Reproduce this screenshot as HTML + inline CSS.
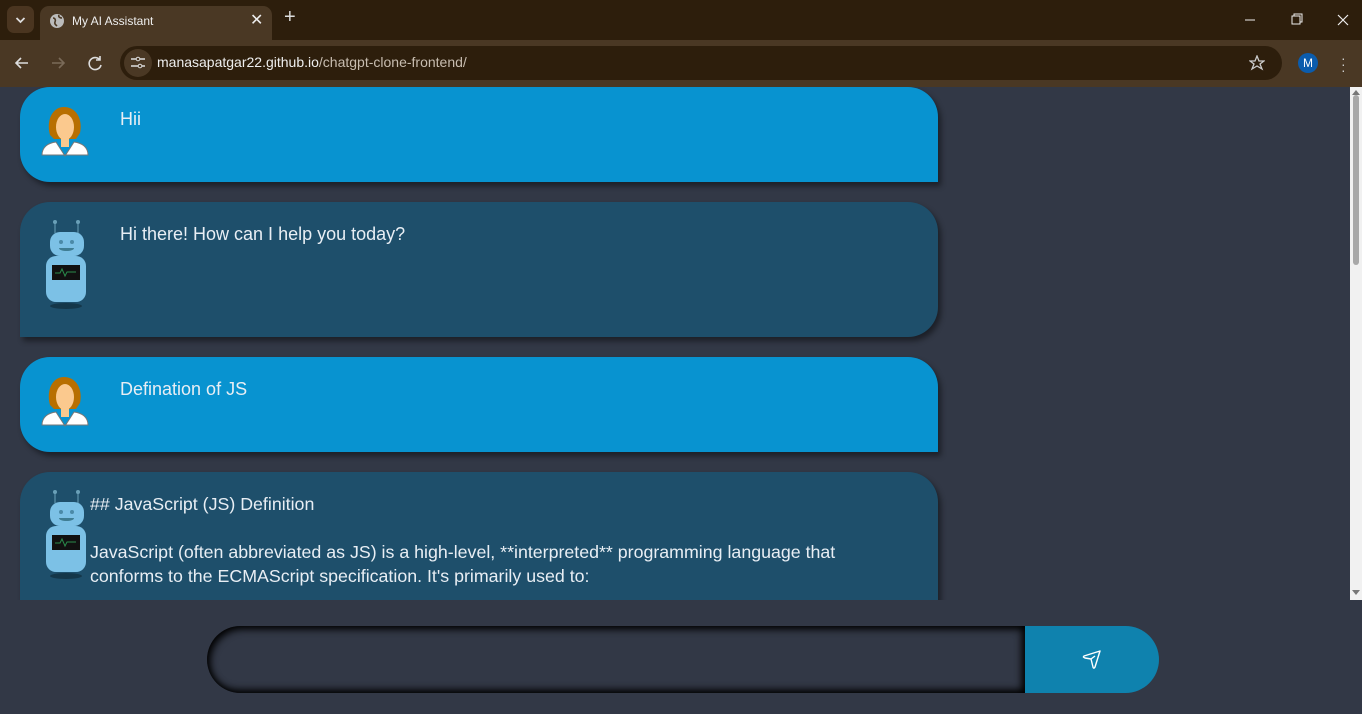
<!DOCTYPE html>
<html><head><meta charset="utf-8"><style>
*{margin:0;padding:0;box-sizing:border-box}
body{width:1362px;height:714px;overflow:hidden;background:#323846;font-family:"Liberation Sans",sans-serif;position:relative}
.tabbar{position:absolute;left:0;top:0;width:1362px;height:40px;background:#2d1e0c}
.tbtn{position:absolute;left:7px;top:6px;width:27px;height:27px;border-radius:7px;background:#4a3520}
.tab{position:absolute;left:40px;top:6px;width:232px;height:34px;background:#4a3824;border-radius:9px 9px 0 0;color:#eee;font-size:12px}
.nav{position:absolute;left:0;top:40px;width:1362px;height:47px;background:#4a3824}
.url{position:absolute;left:120px;top:6px;width:1162px;height:34px;border-radius:17px;background:#2d1e0c;color:#eee;font-size:14px}
.main{position:absolute;left:0;top:87px;width:1350px;height:513px;overflow:hidden}
.card{position:absolute;left:20px;width:918px;color:#e8eef4;font-size:18px;box-shadow:3px 4px 6px rgba(0,0,0,.45)}
.u{background:#0893d0;border-radius:30px 30px 0 30px}
.b{background:#1e4f6b;border-radius:30px 30px 30px 0}
.card .t{position:absolute;left:100px}
.sb{position:absolute;left:1350px;top:87px;width:12px;height:513px;background:#f1f1f1}
</style></head><body>
<div class="tabbar">
 <div class="tbtn"><svg width="27" height="27"><path d="M9.5 12l4 4 4-4" stroke="#ddd" stroke-width="1.8" fill="none"/></svg></div>
 <div class="tab">
  <svg style="position:absolute;left:9px;top:7px" width="16" height="16"><circle cx="8" cy="8" r="7" fill="#bbb"/><path d="M4 5c2 0 3 2 2 4s1 3 2 4M10 2c-1 2 1 3 3 3" stroke="#4a3824" stroke-width="1.6" fill="none"/></svg>
  <span style="position:absolute;left:32px;top:8px">My AI Assistant</span>
  <span style="position:absolute;left:210px;top:4px;font-size:16px">✕</span>
 </div>
 <span style="position:absolute;left:284px;top:6px;color:#ddd;font-size:20px">+</span>
 <svg style="position:absolute;left:1240px;top:12px" width="115" height="16"><path d="M5 8h10" stroke="#eee"/><rect x="52" y="4" width="8" height="8" fill="none" stroke="#eee"/><path d="M54 4V2h8v8h-2" fill="none" stroke="#eee"/><path d="M98 3l10 10M108 3L98 13" stroke="#eee" stroke-width="1.2"/></svg>
</div>
<div class="nav">
 <svg style="position:absolute;left:12px;top:14px" width="100" height="18"><path d="M16 9H4M9 4L4 9l5 5" stroke="#ddd" stroke-width="1.6" fill="none"/><path d="M40 9h12M47 4l5 5-5 5" stroke="#7a6a58" stroke-width="1.6" fill="none"/><path d="M88 6a6 6 0 1 0 1 5M88 2v4h-4" stroke="#ddd" stroke-width="1.6" fill="none"/></svg>
 <div class="url">
  <div style="position:absolute;left:4px;top:3px;width:28px;height:28px;border-radius:14px;background:#4a3824"></div>
  <svg style="position:absolute;left:9px;top:10px" width="18" height="14"><path d="M2 3h5M11 3h5M2 10h7M13 10h3" stroke="#ddd" stroke-width="1.4"/><circle cx="9" cy="3" r="1.8" fill="none" stroke="#ddd"/><circle cx="11" cy="10" r="1.8" fill="none" stroke="#ddd"/></svg>
  <span style="position:absolute;left:37px;top:8px">manasapatgar22.github.io<span style="color:#c8bdb0">/chatgpt-clone-frontend/</span></span>
  <svg style="position:absolute;left:1129px;top:9px" width="16" height="16"><path d="M8 1l2 5h5l-4 3 2 5-5-3-5 3 2-5-4-3h5z" fill="none" stroke="#ccc" stroke-width="1.3"/></svg>
 </div>
 <div style="position:absolute;left:1298px;top:13px;width:20px;height:20px;border-radius:10px;background:#0b5cad;color:#fff;font-size:12px;text-align:center;line-height:20px">M</div>
 <div style="position:absolute;left:1341px;top:15px;color:#ccc;font-size:14px;line-height:6px">·<br>·<br>·</div>
</div>
<div class="main">
 <div class="card u" style="top:0;height:95px"><svg style="position:absolute;left:20px;top:18px" width="50" height="52"><path d="M10 30c-4-14 2-28 14-28s19 12 16 26l-4 6-22 0z" fill="#b86f00"/><ellipse cx="25" cy="22" rx="9" ry="13" fill="#fbc98e"/><rect x="21" y="30" width="8" height="12" fill="#fbc98e"/><path d="M2 50c0-8 6-12 14-13l9 14 9-14c8 1 14 5 14 13z" fill="#fff" stroke="#777"/></svg><span class="t" style="top:22px">Hii</span></div>
 <div class="card b" style="top:115px;height:135px"><svg style="position:absolute;left:24px;top:18px" width="46" height="90"><path d="M11 1v12M34 1v12" stroke="#6aa0b8"/><circle cx="11" cy="2" r="2" fill="#6aa0b8"/><circle cx="34" cy="2" r="2" fill="#6aa0b8"/><rect x="6" y="12" width="34" height="24" rx="10" fill="#7cc1e6"/><circle cx="17" cy="22" r="2" fill="#4b8aa8"/><circle cx="28" cy="22" r="2" fill="#4b8aa8"/><path d="M15 28h15c0 4-15 4-15 0z" fill="#3f7d93"/><rect x="2" y="36" width="40" height="46" rx="10" fill="#7cc1e6"/><rect x="8" y="45" width="28" height="15" fill="#111"/><path d="M11 53h5l2-4 3 7 2-4h9" stroke="#2a8a4a" fill="none"/><ellipse cx="22" cy="86" rx="16" ry="3" fill="rgba(0,0,0,.3)"/></svg><span class="t" style="top:22px">Hi there! How can I help you today?</span></div>
 <div class="card u" style="top:270px;height:95px"><svg style="position:absolute;left:20px;top:18px" width="50" height="52"><path d="M10 30c-4-14 2-28 14-28s19 12 16 26l-4 6-22 0z" fill="#b86f00"/><ellipse cx="25" cy="22" rx="9" ry="13" fill="#fbc98e"/><rect x="21" y="30" width="8" height="12" fill="#fbc98e"/><path d="M2 50c0-8 6-12 14-13l9 14 9-14c8 1 14 5 14 13z" fill="#fff" stroke="#777"/></svg><span class="t" style="top:22px">Defination of JS</span></div>
 <div class="card b" style="top:385px;height:160px"><svg style="position:absolute;left:24px;top:18px" width="46" height="90"><path d="M11 1v12M34 1v12" stroke="#6aa0b8"/><circle cx="11" cy="2" r="2" fill="#6aa0b8"/><circle cx="34" cy="2" r="2" fill="#6aa0b8"/><rect x="6" y="12" width="34" height="24" rx="10" fill="#7cc1e6"/><circle cx="17" cy="22" r="2" fill="#4b8aa8"/><circle cx="28" cy="22" r="2" fill="#4b8aa8"/><path d="M15 28h15c0 4-15 4-15 0z" fill="#3f7d93"/><rect x="2" y="36" width="40" height="46" rx="10" fill="#7cc1e6"/><rect x="8" y="45" width="28" height="15" fill="#111"/><path d="M11 53h5l2-4 3 7 2-4h9" stroke="#2a8a4a" fill="none"/><ellipse cx="22" cy="86" rx="16" ry="3" fill="rgba(0,0,0,.3)"/></svg>
  <div style="position:absolute;left:70px;top:20px;width:820px;font-size:17.8px;line-height:24px">## JavaScript (JS) Definition<br><br>JavaScript (often abbreviated as JS) is a high-level, **interpreted** programming language that conforms to the ECMAScript specification. It's primarily used to:</div></div>
</div>
<div class="sb"><div style="position:absolute;left:3px;top:8px;width:6px;height:170px;border-radius:3px;background:#a8a8a8"></div><svg style="position:absolute;left:2px;top:2px" width="8" height="6"><path d="M0 6l4-5 4 5z" fill="#777"/></svg><svg style="position:absolute;left:2px;top:503px" width="8" height="6"><path d="M0 0l4 5 4-5z" fill="#777"/></svg></div>
<div style="position:absolute;left:207px;top:626px;width:818px;height:67px;border-radius:34px 0 0 34px;background:#323846;box-shadow:inset 3px 3px 8px #000,inset -3px -3px 8px #000"></div>
<div style="position:absolute;left:1025px;top:626px;width:134px;height:67px;border-radius:0 34px 34px 0;background:#0f82ae"><svg style="position:absolute;left:56px;top:22px" width="22" height="22"><path d="M3 8L19 3 14 19c-1 2-2 1-2 0L10 11 4 10c-2-1-2-1-1-2zM10 11l4-3" fill="none" stroke="#fff" stroke-width="1.4" stroke-linejoin="round"/></svg></div>
</body></html>
